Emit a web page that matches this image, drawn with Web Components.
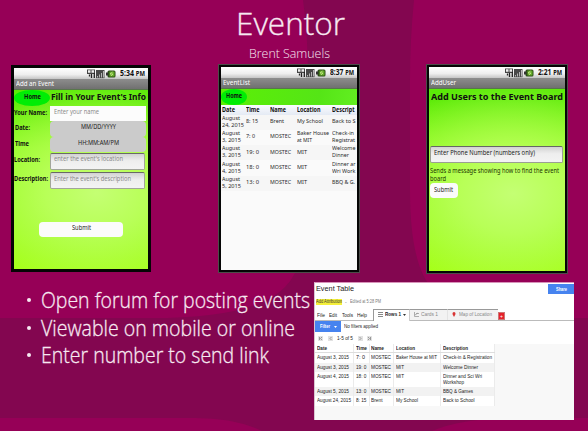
<!DOCTYPE html>
<html lang="en"><head><meta charset="utf-8"><title>Eventor</title>
<style>html,body{margin:0;width:588px;height:431px;overflow:hidden;background:#830650}</style></head>
<body>
<event-poster></event-poster>
<script>
const fitted = [];
class FitText extends HTMLElement {
  constructor(){ super(); this.attachShadow({mode:'open'}).innerHTML =
    `<style>:host{display:inline-block;white-space:nowrap;line-height:1;flex:none}span{display:inline-block;transform-origin:0 50%}:host,span{vertical-align:top}</style><span><slot></slot></span>`; }
  connectedCallback(){ fitted.push(this); }
  fit(){
    const s = this.shadowRoot.querySelector('span'), w = +this.getAttribute('w');
    const n = s.getBoundingClientRect().width;
    if (w && n) { s.style.transform = `scaleX(${w/n})`; this.style.width = w + 'px'; }
  }
}
class PhoneFrame extends HTMLElement {
  constructor(){ super(); this.attachShadow({mode:'open'}).innerHTML = `
<style>
:host{display:flex;flex-direction:column;box-sizing:border-box;border:3px solid #050505;background:var(--screen);overflow:hidden;font-family:"Noto Sans","Open Sans",sans-serif;color:#111}
.status{height:11px;flex:none;display:flex;align-items:center;justify-content:flex-end;padding-right:3px;background:linear-gradient(#fff,#eee 60%,#c5c5c5);font-size:8.3px;font-weight:bold}
.status svg{margin-right:3px}
.bar{height:11px;flex:none;display:flex;align-items:center;padding-left:2px;background:linear-gradient(#8d8d8d,#707070);color:#fff;font-size:6.8px;border-bottom:1px solid #57774a;box-sizing:border-box}
.body{flex:1;min-height:0;display:flex;flex-direction:column}
</style>
<div class="status"><svg width="31" height="10" viewBox="0 0 31 10">
<path d="M1 .5h8v4.500H1z" fill="#444"/><path d="M2 1.200h2.500v2.600H2M5.500 1.200h2.500v2.600H5.500" fill="#eee"/><path d="M3.500 5.500v2M5.500 5v4M8.300 4v5" stroke="#222" stroke-width="1.300" fill="none"/>
<path d="M10 1h8.500v8.200H10z" fill="#484848"/><path d="M11.500 7v1.500M13.500 5.500v3M15.500 4v4.500M17.500 2v6.500" stroke="#b4b4b4"/>
<rect x="21.500" y="1.500" width="8" height="7" rx="1.500" fill="#2d4c19"/><path d="M21 3.500v3" stroke="#333" stroke-width="2"/><rect x="23.500" y="2.500" width="5" height="5" fill="#65ac2b"/><path d="m26.500 3-2.500 2h3l-2 2" stroke="#d2ec94" stroke-width=".7" fill="none"/></svg><slot name="time"></slot></div>
<div class="bar"><slot name="title"></slot></div><div class="body"><slot></slot></div>`; }
}
class HomeButton extends HTMLElement {
  constructor(){ super(); this.attachShadow({mode:'open'}).innerHTML =
  `<style>:host{display:flex;align-items:center;justify-content:center;flex:none;height:16px;border-radius:50%;background:#00ed05;font-size:6.6px;font-weight:bold;padding-bottom:2px;box-sizing:border-box}</style><slot></slot>`; }
}
class FormRow extends HTMLElement {
  constructor(){ super(); this.attachShadow({mode:'open'}).innerHTML = `
<style>
:host{display:grid;grid-template-columns:36px 96px;align-items:center;height:15.5px;flex:none;font-size:6.8px}
.label{font-weight:bold;display:flex}
.field{height:100%;box-sizing:border-box;display:flex;align-items:center;padding:0 0 1.5px 4px;color:#8a8a8a;background:#fcfcfc}
:host([kind=pick]) .field{background:#cbcbcb;border-radius:4px;justify-content:center;color:#222;padding:0 0 2px}
:host([kind=pick]) .label{padding-left:1px}
:host([kind=box]){height:17px;margin-top:.5px;margin-bottom:2px}
:host([kind=box]) .field{background:linear-gradient(#d2d2d2,#eee 45%,#f3f3f3);border:1px solid #a2a59b;border-top-color:#686868;border-radius:2px;margin-right:1px;padding:0 0 2.5px 3px}
:host([kind=box]) .label{padding-bottom:2px}
</style><div class="label"><slot name="label"></slot></div><div class="field"><slot></slot></div>`; }
}
class SubmitButton extends HTMLElement {
  constructor(){ super(); this.attachShadow({mode:'open'}).innerHTML =
  `<style>:host{display:flex;align-items:center;justify-content:center;flex:none;height:15.5px;box-sizing:border-box;padding-bottom:1px;border-radius:4px;background:#fbfbfb;font-size:6.8px;color:#222}</style><slot></slot>`; }
}
class MobileList extends HTMLElement {
  constructor(){ super();
    const rows = [
      [['August',18],['24, 2015',22],['8: 15',12],['Brent',14],['My School',26],['Back to S',23.5]],
      [['August',18],['3, 2015',19],['7: 0',9],['MOSTEC',21],['Baker House',32],['at MIT',15],['Check-in',22],['Registrat',23]],
      [['August',18],['3, 2015',19],['19: 0',13],['MOSTEC',21],['MIT',10],['Welcome',23.5],['Dinner',17]],
      [['August',18],['4, 2015',19],['18: 0',13],['MOSTEC',21],['MIT',10],['Dinner ar',23.5],['Wri Work',23.5]],
      [['August',18],['5, 2015',19],['13: 0',13],['MOSTEC',21],['MIT',10],['BBQ & G.',23]]
    ];
    const shape = [[2,1,1,1,1],[2,1,1,2,2],[2,1,1,1,2],[2,1,1,1,2],[2,1,1,1,1]];
    const t = ([s,w]) => `<fit-text w="${w}">${s.replace('&','&amp;')}</fit-text>`;
    this.attachShadow({mode:'open'}).innerHTML = `
<style>
:host{display:block;flex:1;background:#fafafa;font-size:5.9px;color:#2a2a2a}
.r{display:grid;grid-template-columns:24.5px 24px 27px 34.5px 1fr;height:15.3px;align-items:center;padding-left:.5px}
.r>div{display:flex;flex-direction:column;gap:1.2px}
.h{height:9.5px;background:linear-gradient(#fbfcff,#e4eaf4);font-weight:bold;color:#111;font-size:6.2px}
.r:nth-child(odd):not(.h){background:#f6f6f6}
</style><div class="r h">${[['Date',13],['Time',13.5],['Name',16],['Location',23.5],['Descript',22.5]].map(c=>`<div>${t(c)}</div>`).join('')}</div>` +
    rows.map((r,i)=>{ let k=0; return `<div class="r">${shape[i].map(n=>{const c=r.slice(k,k+n);k+=n;return `<div>${c.map(t).join('')}</div>`}).join('')}</div>`}).join('');
  }
}
class SheetPanel extends HTMLElement {
  constructor(){ super();
    const t = (s,w) => `<fit-text w="${w}">${s}</fit-text>`;
    const rows = [
      ['August 3, 2015',32,'7: 0',9,'MOSTEC',20,'Baker House at MIT',41,[['Check-in &amp; Registration',49]]],
      ['August 3, 2015',32,'19: 0',10.5,'MOSTEC',20,'MIT',8,[['Welcome Dinner',35]]],
      ['August 4, 2015',32,'18: 0',10.5,'MOSTEC',20,'MIT',8,[['Dinner and Sci Wri',39],['Workshop',21]]],
      ['August 5, 2015',32,'13: 0',10.5,'MOSTEC',20,'MIT',8,[['BBQ &amp; Games',30]]],
      ['August 24, 2015',34,'8: 15',10.5,'Brent',11.5,'My School',22,[['Back to School',31.5]]]
    ];
    this.attachShadow({mode:'open'}).innerHTML = `
<style>
:host{display:flex;flex-direction:column;box-sizing:border-box;background:#fff;font-family:"Liberation Sans",Arial,sans-serif;font-size:5.1px;color:#222;border-left:1px solid #d9c6d1;border-top:1px solid #d894ba}
div{box-sizing:border-box;flex:none}
.top{height:12px;display:flex;justify-content:space-between;align-items:center;padding-left:1px;font-size:8px}
.share{width:26px;height:10px;background:#4683ef;color:#fff;font-weight:bold;font-size:5px;display:flex;align-items:center;justify-content:center}
.attr{height:13px;display:flex;align-items:center;padding-left:1px;gap:3px;color:#777}
mark{background:#f5f03b;color:#333;display:flex;height:6px;align-items:center}
.tabs{height:13px;display:flex;align-items:flex-end;border-bottom:1px solid #bbb}
.menu{width:58px;height:11px;display:flex;align-items:center;gap:4.5px;padding:2px 0 0 1.5px;font-size:5.3px}
.tab{height:11.5px;display:flex;align-items:center;gap:2px;background:#f2f2f2;border-top:1px solid #999;color:#888;padding-left:4px}
.tab.on{background:#fff;border-left:1px solid #999;color:#222;font-weight:bold;height:12.5px;padding-bottom:1px;margin-bottom:-1px;border-right:1px solid #ccc}
.add{width:7px;height:8px;background:#e5212b;color:#fff;border:1px solid #c77;display:flex;align-items:center;justify-content:center;font-size:5px}
.filter{height:11px;display:flex;align-items:center;gap:3px}
.btn{width:26px;height:10.5px;display:flex;align-items:center;justify-content:center;gap:4px;background:#4683ef;color:#fff;font-weight:bold}
.page{height:12px;display:flex;align-items:center;gap:4.5px;padding:1px 0 0 3px}
.page svg{flex:none}
.grid{flex:1;background:#f8f8f8}
.r{width:180px;display:grid;grid-template-columns:39px 15.5px 24.5px 47px 54px;height:9.4px;background:#fff}
.r>div{padding:2px 0 0 1.5px;border-right:1px solid #ebebeb;display:flex;flex-direction:column;gap:.9px}
.r:nth-child(odd):not(.h){background:#f2f2f2}
.r.tall{height:14.6px}.h{font-weight:bold;border-bottom:1px solid #ddd}
</style>
<div class="top">${t('Event Table',38)}<div class="share">${t('Share',11)}</div></div>
<div class="attr"><mark>${t('Add Attribution',26)}</mark><span>-</span>${t('Edited at 5:28 PM',31)}</div>
<div class="tabs"><div class="menu">${t('File',8)}${t('Edit',8)}${t('Tools',11)}${t('Help',10)}</div>
<div class="tab on" style="width:37px"><svg width="5" height="5"><path d="M0 .5h5M0 2.5h5M0 4.5h5" stroke="#888"/></svg>${t('Rows 1',16)}<svg width="3" height="2"><path d="M0 0h3L1.5 2z" fill="#333"/></svg></div>
<div class="tab" style="width:37px"><svg width="5" height="5"><path d="M.5 0v4.5H5M2 1.5h3M1 3l3-2" stroke="#999" fill="none" stroke-width=".8"/></svg>${t('Cards 1',17)}</div>
<div class="tab" style="width:51px;gap:3px;border-left:1px solid #e3e3e3"><svg width="4" height="5"><path d="M2 5C1 3 .5 2.5.5 1.5a1.5 1.5 0 0 1 3 0C3.500 2.500 3 3 2 5" fill="#d83434"/></svg>${t('Map of Location',33)}</div><div class="add">+</div></div>
<div class="filter"><div class="btn">${t('Filter',10)}<svg width="3" height="2"><path d="M0 0h3L1.500 2z" fill="#fff"/></svg></div>${t('No filters applied',34)}</div>
<div class="page"><svg width="5" height="5"><path fill="#e2e2e2" d="M0 0h5v5H0z"/><path d="M1.500 1v3M4 1 2.500 2.500 4 4" stroke="#999" fill="none"/></svg><svg width="5" height="5"><path fill="#e2e2e2" d="M0 0h5v5H0z"/><path d="M3.500 1 2 2.500 3.500 4" stroke="#999" fill="none"/></svg>${t('1-5 of 5',16)}<svg width="5" height="5"><path fill="#e2e2e2" d="M0 0h5v5H0z"/><path d="M1.500 1 3 2.500 1.500 4" stroke="#999" fill="none"/></svg><svg width="5" height="5"><path fill="#e2e2e2" d="M0 0h5v5H0z"/><path d="M3.500 1v3M1 1l1.500 1.500L1 4" stroke="#999" fill="none"/></svg></div>
<div class="grid"><div class="r h"><div>${t('Date',10)}</div><div>${t('Time',11)}</div><div>${t('Name',13)}</div><div>${t('Location',19)}</div><div>${t('Description',25)}</div></div>
${rows.map(r=>`<div class="r${r[8].length>1?' tall':''}"><div>${t(r[0],r[1])}</div><div>${t(r[2],r[3])}</div><div>${t(r[4],r[5])}</div><div>${t(r[6],r[7])}</div><div>${r[8].map(x=>t(x[0],x[1])).join('')}</div></div>`).join('')}</div>`;
  }
}
class EventPoster extends HTMLElement {
  constructor(){ super(); this.attachShadow({mode:'open'}).innerHTML = `
<style>
:host{display:grid;grid-template-rows:64px 218px 149px;width:588px;height:431px;position:relative;isolation:isolate;color:#f7e9f1;font-family:"Open Sans",sans-serif;font-weight:300}
.bg{position:absolute;inset:0;z-index:-1}
header{display:flex;flex-direction:column;align-items:center;padding-right:8px}
.t{font-size:32px;height:47px;padding-top:7px;box-sizing:border-box;display:flex;align-items:flex-start;-webkit-text-stroke:.3px #f7e9f1}
.s{font-size:13.5px;height:17px;display:flex;align-items:flex-start;padding-right:1px}
.phones{display:flex;align-items:flex-start;padding-left:11px}
phone-frame{font-weight:400;flex:none}
.p1,.p3{--screen:radial-gradient(ellipse 110% 55% at 62% 62%,#c4ff73,#b8ff57 35%,transparent),linear-gradient(#5bea08 15%,#86f916 40%,#a2ff0c)}
.p1{width:140px;height:207px;margin:1px 67px 0 0}
.p2{width:142px;height:209px;margin-right:66px;--screen:linear-gradient(100deg,#5cf005,#55e516 60%,#6cf52a);outline:1px solid #4c4c49;outline-offset:-1px}
.p3{width:142px;height:210px;outline:1px solid #4c4c49;outline-offset:-1px}
.head{display:flex;align-items:flex-start;height:15.500px;flex:none;font-weight:700;font-size:9px;gap:1px}
.head>fit-text{margin-top:1.5px}
.submit1{width:84px;margin:30.500px 0 0 25px}
.h3{height:17px;display:flex;align-items:center;padding:0 0 2px 1.5px;box-sizing:border-box;font-weight:700;font-size:9px}
.phone-in{height:17px;box-sizing:border-box;margin:40px 2px 0 1px;border:1px solid #9b9e94;border-top-color:#666;border-radius:2px;background:linear-gradient(#d2d2d2,#eee 45%,#f3f3f3);padding:3px 0 0 2.500px;font-size:6.8px;display:flex;color:#222}
.note{font-size:6.2px;display:flex;flex-direction:column;gap:1.500px;margin:5px 0 1px .5px;color:#1c3503}
.submit3{width:28px;margin-left:.5px}
.bottom{display:grid;grid-template-columns:314px 260px}
ul{list-style:none;margin:0;padding:3.800px 0 0 26px;font-size:22px;-webkit-text-stroke:.3px #f7e9f1}
li{display:flex;align-items:center;height:27.200px;gap:10px}
li i{width:4px;height:4px;margin:2px .5px 0;border-radius:50%;background:#f7e9f1;flex:none}
sheet-panel{height:138px;font-weight:400}
</style>
<svg class="bg" width="588" height="431"><path fill="#830650" d="M0 0h588v431H0z"/><g fill="#960057"><path d="M0 0h303Q308 35 308 80V190Q308 265 285 287 256 318 150 318H0Z"/><path d="M588 0H414Q410 40 410 80V190Q410 268 434 290 462 318 540 318h48Z"/><path d="M0 418h195Q235 418 262 431H0ZM588 418H510Q460 419 432 431H588Z"/></g></svg>
<header><div class="t"><fit-text w="109">Eventor</fit-text></div><div class="s"><fit-text w="81">Brent Samuels</fit-text></div></header>
<div class="phones">
<phone-frame class="p1"><fit-text slot="time" w="25">5:34 <small>PM</small></fit-text><fit-text slot="title" w="38">Add an Event</fit-text>
<div class="head"><home-button style="width:36px"><fit-text w="17">Home</fit-text></home-button><fit-text w="95">Fill in Your Event's Info</fit-text></div>
<form-row><fit-text slot="label" w="33">Your Name:</fit-text><fit-text w="45">Enter your name</fit-text></form-row>
<form-row kind="pick"><fit-text slot="label" w="15">Date:</fit-text><fit-text w="35">MM/DD/YYYY</fit-text></form-row>
<form-row kind="pick"><fit-text slot="label" w="14">Time</fit-text><fit-text w="41">HH:MM:AM/PM</fit-text></form-row>
<form-row kind="box"><fit-text slot="label" w="26">Location:</fit-text><fit-text w="69">enter the event's location</fit-text></form-row>
<form-row kind="box"><fit-text slot="label" w="34">Description:</fit-text><fit-text w="77">Enter the event's description</fit-text></form-row>
<submit-button class="submit1"><fit-text w="19">Submit</fit-text></submit-button></phone-frame>
<phone-frame class="p2"><fit-text slot="time" w="24">8:37 <small>PM</small></fit-text><fit-text slot="title" w="27">EventList</fit-text>
<home-button style="width:26px"><fit-text w="16">Home</fit-text></home-button><mobile-list></mobile-list></phone-frame>
<phone-frame class="p3"><fit-text slot="time" w="24">2:21 <small>PM</small></fit-text><fit-text slot="title" w="25">AddUser</fit-text>
<div class="h3"><fit-text w="132">Add Users to the Event Board</fit-text></div>
<div class="phone-in"><fit-text w="101">Enter Phone Number (numbers only)</fit-text></div>
<div class="note"><fit-text w="129">Sends a message showing how to find the event</fit-text><fit-text w="16">board</fit-text></div>
<submit-button class="submit3"><fit-text w="19">Submit</fit-text></submit-button></phone-frame>
</div>
<div class="bottom"><ul><li><i></i><fit-text w="269">Open forum for posting events</fit-text></li><li><i></i><fit-text w="254">Viewable on mobile or online</fit-text></li><li><i></i><fit-text w="228">Enter number to send link</fit-text></li></ul><sheet-panel></sheet-panel></div>`; }
}
customElements.define('fit-text', FitText);
customElements.define('phone-frame', PhoneFrame);
customElements.define('home-button', HomeButton);
customElements.define('form-row', FormRow);
customElements.define('submit-button', SubmitButton);
customElements.define('mobile-list', MobileList);
customElements.define('sheet-panel', SheetPanel);
customElements.define('event-poster', EventPoster);
fitted.forEach(e => e.fit());
</script></body></html>
